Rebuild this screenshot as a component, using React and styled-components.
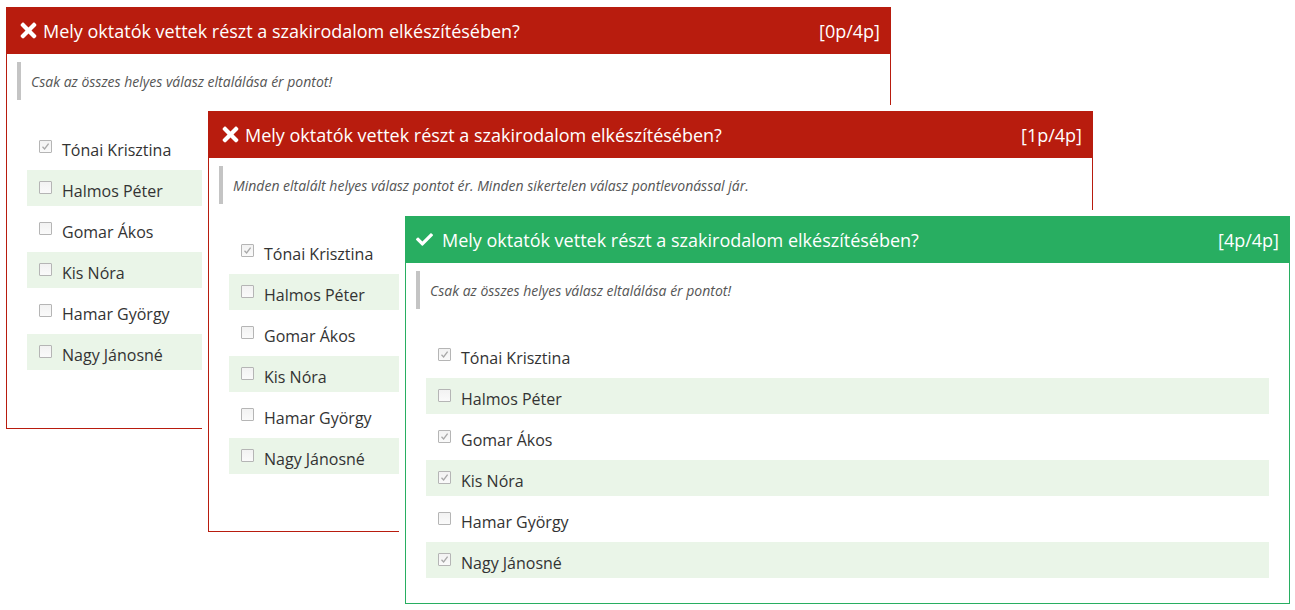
import React from "react";
import styled, { createGlobalStyle } from "styled-components";
import { FaTimes, FaCheck } from "react-icons/fa";

const GlobalStyle = createGlobalStyle`
  body {
    margin: 0;
    background: #fff;
    font-family: "Open Sans", "Liberation Sans", sans-serif;
  }
`;

const Canvas = styled.div`
  position: relative;
  width: 1295px;
  height: 610px;
  overflow: hidden;
`;

const Card = styled.div`
  position: absolute;
  left: ${(p) => p.$x}px;
  top: ${(p) => p.$y}px;
  width: 885px;
  box-sizing: border-box;
  border: 1px solid ${(p) => p.$color};
  border-top: none;
  background: #fff;
  box-shadow: 0 0 0 6px #fff;
  padding-bottom: ${(p) => p.$bottom}px;
`;

const Header = styled.div`
  display: flex;
  align-items: center;
  height: 47px;
  margin: 0 -1px;
  padding: 0 11px 0 11px;
  background: ${(p) => p.$color};
  color: #fff;
  font-size: 18px;
`;

const Icon = styled.span`
  display: flex;
  align-items: center;
  width: 26px;
  font-size: ${(p) => (p.$ok ? 17 : 23)}px;
`;

const Title = styled.div`
  flex: 1;
`;

const Score = styled.div`
  font-size: 18px;
`;

const Notice = styled.div`
  margin: 8px 0 0 10px;
  padding: 0 0 0 10px;
  border-left: 4px solid #c4c4c4;
  height: 38px;
  display: flex;
  align-items: center;
  font-size: 14px;
  font-style: italic;
  color: #555;
`;

const List = styled.div`
  display: flex;
  flex-direction: column;
  gap: 5px;
  margin: ${(p) => p.$top}px 20px 0 20px;
`;

const Row = styled.div`
  display: flex;
  align-items: center;
  height: 36px;
  box-sizing: border-box;
  padding: 5px 0 0 12px;
  background: ${(p) => (p.$shaded ? "#eaf5e8" : "transparent")};
  font-size: 16px;
  color: #333;
`;

const Box = styled.span`
  display: flex;
  align-items: center;
  justify-content: center;
  width: 11px;
  height: 11px;
  border: 1px solid #b5b5b5;
  border-radius: 1px;
  background: linear-gradient(#f2f2f2, #fafafa);
  margin-right: 10px;
  margin-top: -6px;
`;

const Check = () => (
  <svg width="9" height="9" viewBox="0 0 9 9">
    <path d="M1.5 4.8 L3.6 7 L7.6 1.6" fill="none" stroke="#a8a8a8" strokeWidth="1.3" />
  </svg>
);

const names = [
  "Tónai Krisztina",
  "Halmos Péter",
  "Gomar Ákos",
  "Kis Nóra",
  "Hamar György",
  "Nagy Jánosné",
];

const title = "Mely oktatók vettek részt a szakirodalom elkészítésében?";

function Question({ x, y, ok, score, notice, checked, listTop = 29, bottom }) {
  const color = ok ? "#28ae61" : "#b81c0e";
  return (
    <Card $x={x} $y={y} $color={color} $bottom={bottom}>
      <Header $color={color}>
        <Icon $ok={ok}>{ok ? <FaCheck /> : <FaTimes />}</Icon>
        <Title>{title}</Title>
        <Score>{score}</Score>
      </Header>
      <Notice>{notice}</Notice>
      <List $top={listTop}>
        {names.map((n, i) => (
          <Row key={n} $shaded={i % 2 === 1}>
            <Box>{checked.includes(i) && <Check />}</Box>
            {n}
          </Row>
        ))}
      </List>
    </Card>
  );
}

export default function App() {
  return (
    <Canvas>
      <GlobalStyle />
      <Question
        x={6}
        y={7}
        score="[0p/4p]"
        notice="Csak az összes helyes válasz eltalálása ér pontot!"
        checked={[0]}
        bottom={58}
      />
      <Question
        x={208}
        y={111}
        score="[1p/4p]"
        notice="Minden eltalált helyes válasz pontot ér. Minden sikertelen válasz pontlevonással jár."
        checked={[0]}
        bottom={57}
      />
      <Question
        x={405}
        y={216}
        ok
        score="[4p/4p]"
        notice="Csak az összes helyes válasz eltalálása ér pontot!"
        checked={[0, 2, 3, 5]}
        listTop={28}
        bottom={25}
      />
    </Canvas>
  );
}
